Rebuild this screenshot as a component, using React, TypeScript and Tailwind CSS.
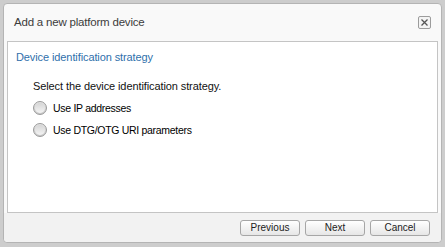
import React, { useState } from 'react';

const options = [
  { id: 'ip', label: 'Use IP addresses' },
  { id: 'uri', label: 'Use DTG/OTG URI parameters' },
];

const buttons = ['Previous', 'Next', 'Cancel'];

const Radio: React.FC<{ checked: boolean }> = ({ checked }) => (
  <span className="w-[14px] h-[14px] rounded-full border border-[#9a9a9a] bg-gradient-to-b from-[#e4e4e4] to-[#c9c9c9] flex items-center justify-center shrink-0">
    <span className="w-[10px] h-[10px] rounded-full bg-gradient-to-b from-[#d6d6d6] to-[#f4f4f4] flex items-center justify-center">
      {checked && <span className="w-[5px] h-[5px] rounded-full bg-[#333]" />}
    </span>
  </span>
);

export default function App() {
  const [strategy, setStrategy] = useState('');

  return (
    <div
      className="w-[445px] h-[247px] bg-[#cdcdcd] pt-[3px] pl-[3px]"
      style={{ fontFamily: '"Liberation Sans", Arial, sans-serif' }}
    >
      <div className="w-[439px] h-[240px] bg-[#f9f9f9] border border-[#b4b4b4] rounded-[4px] flex flex-col">
        {/* Title bar */}
        <div className="h-[37px] flex items-center justify-between pl-[10px] pr-[10px]">
          <span className="text-[11.5px] tracking-[-0.2px] text-[#3c3c3c]">Add a new platform device</span>
          <button className="w-[13px] h-[13px] border border-[#9c9c9c] rounded-[2px] bg-[#f4f4f4] flex items-center justify-center">
            <svg width="7" height="7" viewBox="0 0 7 7">
              <path d="M0.5 0.5 L6.5 6.5 M6.5 0.5 L0.5 6.5" stroke="#555" strokeWidth="1.3" />
            </svg>
          </button>
        </div>

        {/* Content panel */}
        <div className="mx-[3px] flex-1 bg-white border border-[#c4c4c4] pl-[8px] pt-[7px] leading-[16px]">
          <div className="text-[11px] tracking-[-0.1px] text-[#2f6fab]">Device identification strategy</div>
          <div className="pl-[17px] pt-[13px]">
            <div className="text-[11px] tracking-[-0.1px] text-[#111]">Select the device identification strategy.</div>
            <div className="mt-[6px] flex flex-col gap-[6px]">
              {options.map((o) => (
                <label
                  key={o.id}
                  className="flex items-center gap-[6px] cursor-pointer"
                  onClick={() => setStrategy(o.id)}
                >
                  <Radio checked={strategy === o.id} />
                  <span className="text-[10.5px] tracking-[-0.3px] text-black">{o.label}</span>
                </label>
              ))}
            </div>
          </div>
        </div>

        {/* Footer */}
        <div className="h-[29px] bg-[#f2f2f2] rounded-b-[4px] flex items-center justify-end gap-[5px] pr-[11px]">
          {buttons.map((b) => (
            <button
              key={b}
              className="w-[60px] h-[16px] rounded-[3px] border border-[#a6a6a6] bg-gradient-to-b from-white to-[#e6e6e6] text-[10px] text-[#222] leading-none"
            >
              {b}
            </button>
          ))}
        </div>
      </div>
    </div>
  );
}
